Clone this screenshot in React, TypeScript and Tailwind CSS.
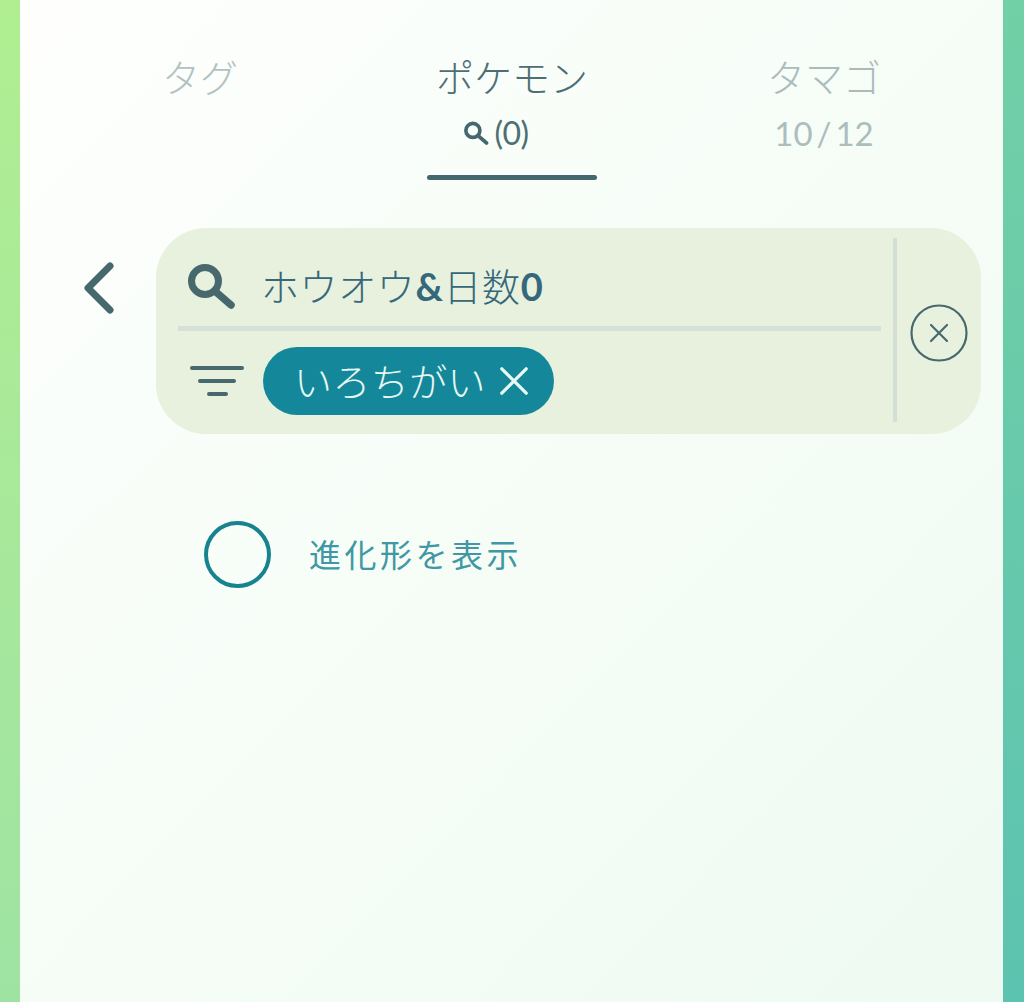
const cjk = "font-['Lato','Noto_Sans_CJK_JP',sans-serif]";

function SearchIcon({ className }: { className: string }) {
  return (
    <svg viewBox="0 0 50 46" className={className} fill="none" stroke="currentColor">
      <circle cx="19" cy="18" r="13.5" strokeWidth="7" />
      <path d="M30 29 L45 42" strokeWidth="7.5" strokeLinecap="round" />
    </svg>
  );
}

export default function App() {
  return (
    <div className={`flex h-[1002px] w-[1024px] overflow-hidden ${cjk}`}>
      <div className="w-[20px] shrink-0 bg-gradient-to-b from-[#b0ee91] to-[#9fe3a3]" />
      <div className="w-[983px] shrink-0 bg-gradient-to-br from-[#fefffd] via-[#f6fdf7] to-[#eefaf2]">
        <div className="flex pl-[24px] pt-[53px]">
          <div className="w-[312px] text-center">
            <div className="text-[38px] leading-[48px] font-light text-[#b3c2c1]">タグ</div>
          </div>
          <div className="flex w-[312px] flex-col items-center">
            <div className="text-[38px] leading-[48px] font-light text-[#4d6f73]">ポケモン</div>
            <div className="mr-[32px] mt-[14px] flex h-[36px] items-center gap-[5px] text-[32px] tracking-[-0.5px] text-[#4d6f73]">
              <SearchIcon className="h-[24px] w-[26px] text-[#44686d]" />
              <span>(0)</span>
            </div>
            <div className="mt-[24px] h-[5px] w-[170px] rounded-full bg-[#44686d]" />
          </div>
          <div className="w-[312px] text-center">
            <div className="text-[38px] leading-[48px] font-light text-[#a9bbbb]">タマゴ</div>
            <div className="mt-[14px] text-[33px] leading-[36px] text-[#acbdbe]">10<span className="mx-[4px]">/</span>12</div>
          </div>
        </div>

        <div className="mt-[48px] flex">
          <div className="w-[136px] shrink-0 pl-[62px] pt-[33px]">
            <svg viewBox="0 0 34 54" className="h-[54px] w-[34px]" fill="none" stroke="#47696e" strokeWidth="7" strokeLinecap="round" strokeLinejoin="round">
              <path d="M28 5 L6 27 L28 49" />
            </svg>
          </div>
          <div className="flex h-[206px] w-[825px] rounded-[50px] bg-[#e7f1de] pl-[22px]">
            <div className="w-[703px] shrink-0">
              <div className="flex h-[98px] items-center pt-[18px]">
                <SearchIcon className="ml-[8px] h-[46px] w-[50px] text-[#47696e]" />
                <span className="ml-[25px] text-[38px] font-light leading-[48px] tracking-[0.6px] text-[#35687a]">
                  ホウオウ<span className="font-bold">&amp;</span>日数<span className="font-bold">0</span>
                </span>
              </div>
              <div className="h-[5px] bg-[#d4e0d8]" />
              <div className="flex items-center pt-[16px]">
                <svg viewBox="0 0 54 32" className="ml-[12px] h-[32px] w-[54px]" fill="none" stroke="#47696e" strokeLinecap="round" strokeWidth="4">
                  <path d="M2 3 H52 M10 16 H44 M19 29 H36" />
                </svg>
                <div className="ml-[19px] flex h-[68px] w-[291px] items-center rounded-full bg-[#14889a] pl-[31px] text-[#e8f8f4]">
                  <span className="text-[38px] font-light leading-[48px] tracking-[0.4px]">いろちがい</span>
                  <svg viewBox="0 0 32 32" className="ml-[13px] h-[30px] w-[30px]" fill="none" stroke="currentColor" strokeWidth="3.5" strokeLinecap="round">
                    <path d="M3 3 L29 29 M29 3 L3 29" />
                  </svg>
                </div>
              </div>
            </div>
            <div className="ml-[12px] mt-[10px] h-[184px] w-[4px] bg-[#d2ded6]" />
            <div className="flex flex-1 items-center pl-[13px] pt-[4px]">
              <svg viewBox="0 0 58 58" className="h-[58px] w-[58px]" fill="none" stroke="#47696e">
                <circle cx="29" cy="29" r="27.5" strokeWidth="2.2" />
                <path d="M21 21 L37 37 M37 21 L21 37" strokeWidth="2.2" strokeLinecap="round" />
              </svg>
            </div>
          </div>
        </div>

        <div className="ml-[184px] mt-[87px] flex items-center">
          <div className="h-[67px] w-[67px] rounded-full border-[4px] border-[#17838f]" />
          <span className="ml-[38px] text-[32px] leading-[40px] tracking-[3.5px] text-[#3f98a3]">進化形を表示</span>
        </div>
      </div>
      <div className="w-[21px] shrink-0 bg-gradient-to-b from-[#72d0a6] to-[#5cc3b0]" />
    </div>
  );
}
